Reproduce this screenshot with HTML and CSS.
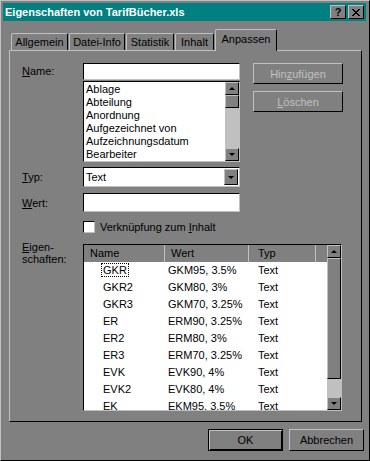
FILE: index.html
```html
<!DOCTYPE html>
<html lang="de">
<head>
    <meta charset="UTF-8">
    <title>Eigenschaften von TarifBücher.xls</title>
    <link rel="stylesheet" href="styles.css">
</head>
<body>
    <div class="window">
        <div class="titlebar">
            <span class="title">Eigenschaften von TarifBücher.xls</span>
            <div class="caption-buttons">
                <span class="cap-btn">?</span>
                <span class="cap-btn">
                    <svg width="8" height="7" viewBox="0 0 8 7"><path d="M0 0h2v1h1v1h2v-1h1v-1h2v1h-1v1h-1v1h-1v1h1v1h1v1h1v1h-2v-1h-1v-1h-2v1h-1v1h-2v-1h1v-1h1v-1h1v-1h-1v-1h-1v-1h-1z" fill="#000"/></svg>
                </span>
            </div>
        </div>

        <div class="tabs">
            <div class="tab" style="width: 57px">Allgemein</div>
            <div class="tab" style="width: 56px">Datei-Info</div>
            <div class="tab" style="width: 48px">Statistik</div>
            <div class="tab" style="width: 39px">Inhalt</div>
            <div class="tab active" style="width: 62px">Anpassen</div>
        </div>

        <div class="panel">
            <div class="row row-name">
                <label class="lbl"><u>N</u>ame:</label>
                <div class="name-col">
                    <div class="field name-input"></div>
                    <div class="field listbox">
                        <div class="list-items">
                            <div>Ablage</div>
                            <div>Abteilung</div>
                            <div>Anordnung</div>
                            <div>Aufgezeichnet von</div>
                            <div>Aufzeichnungsdatum</div>
                            <div>Bearbeiter</div>
                        </div>
                        <div class="vscroll">
                            <span class="sb-btn up"></span>
                            <span class="sb-thumb small"></span>
                            <span class="sb-track"></span>
                            <span class="sb-btn down"></span>
                        </div>
                    </div>
                </div>
                <div class="side-buttons">
                    <span class="btn disabled">Hin<u>z</u>ufügen</span>
                    <span class="btn disabled"><u>L</u>öschen</span>
                </div>
            </div>

            <div class="row row-typ">
                <label class="lbl"><u>T</u>yp:</label>
                <div class="field combo">
                    <span class="combo-text">Text</span>
                    <span class="sb-btn down combo-btn"></span>
                </div>
            </div>

            <div class="row row-wert">
                <label class="lbl"><u>W</u>ert:</label>
                <div class="field wert-input"></div>
            </div>

            <div class="row row-check">
                <span class="checkbox"></span>
                <span class="check-label">Verknüpfung zum <u>I</u>nhalt</span>
            </div>

            <div class="row row-props">
                <label class="lbl two-line"><u>E</u>igen-<br>schaften:</label>
                <div class="field listview">
                    <div class="lv-main">
                        <div class="lv-header">
                            <span class="hcell c-name">Name</span>
                            <span class="hcell c-wert">Wert</span>
                            <span class="hcell c-typ">Typ</span>
                            <span class="hcell c-rest"></span>
                        </div>
                        <div class="lv-body">
                            <div class="lv-row"><span class="cell c-name"><span class="focus">GKR</span></span><span class="cell c-wert">GKM95, 3.5%</span><span class="cell c-typ">Text</span></div>
                            <div class="lv-row"><span class="cell c-name">GKR2</span><span class="cell c-wert">GKM80, 3%</span><span class="cell c-typ">Text</span></div>
                            <div class="lv-row"><span class="cell c-name">GKR3</span><span class="cell c-wert">GKM70, 3.25%</span><span class="cell c-typ">Text</span></div>
                            <div class="lv-row"><span class="cell c-name">ER</span><span class="cell c-wert">ERM90, 3.25%</span><span class="cell c-typ">Text</span></div>
                            <div class="lv-row"><span class="cell c-name">ER2</span><span class="cell c-wert">ERM80, 3%</span><span class="cell c-typ">Text</span></div>
                            <div class="lv-row"><span class="cell c-name">ER3</span><span class="cell c-wert">ERM70, 3.25%</span><span class="cell c-typ">Text</span></div>
                            <div class="lv-row"><span class="cell c-name">EVK</span><span class="cell c-wert">EVK90, 4%</span><span class="cell c-typ">Text</span></div>
                            <div class="lv-row"><span class="cell c-name">EVK2</span><span class="cell c-wert">EVK80, 4%</span><span class="cell c-typ">Text</span></div>
                            <div class="lv-row"><span class="cell c-name">EK</span><span class="cell c-wert">EKM95, 3.5%</span><span class="cell c-typ">Text</span></div>
                        </div>
                    </div>
                    <div class="vscroll">
                        <span class="sb-btn up"></span>
                        <span class="sb-thumb big"></span>
                        <span class="sb-track"></span>
                        <span class="sb-btn down"></span>
                    </div>
                </div>
            </div>
        </div>

        <div class="footer">
            <span class="btn default">OK</span>
            <span class="btn">Abbrechen</span>
        </div>
    </div>
</body>
</html>
```

FILE: styles.css
```css
body {
    margin: 0;
    background-color: #808080;
    font-family: "Liberation Sans", Arial, sans-serif;
    font-size: 11px;
    color: #000;
}

.window {
    width: 370px;
    height: 461px;
    box-sizing: border-box;
    border: 1px solid;
    border-color: #c0c0c0 #000 #000 #c0c0c0;
    padding: 2px 3px 0 2px;
}

/* title bar */
.titlebar {
    height: 18px;
    background-color: #008080;
    display: flex;
    align-items: center;
    justify-content: space-between;
    padding: 0 2px 0 2px;
}

.title {
    color: #fff;
    font-weight: bold;
    font-size: 11px;
}

.caption-buttons {
    display: flex;
    gap: 2px;
}

.cap-btn {
    width: 14px;
    height: 12px;
    background-color: #808080;
    border: 1px solid;
    border-color: #c0c0c0 #000 #000 #c0c0c0;
    display: flex;
    align-items: center;
    justify-content: center;
    font-weight: bold;
    font-size: 11px;
}

/* tabs */
.tabs {
    display: flex;
    align-items: flex-end;
    height: 21px;
    margin-top: 8px;
    padding-left: 8px;
    position: relative;
    z-index: 1;
}

.tab {
    height: 17px;
    box-sizing: border-box;
    border: 1px solid;
    border-bottom: none;
    border-color: #c0c0c0 #000 #000 #c0c0c0;
    border-radius: 2px 2px 0 0;
    text-align: center;
    line-height: 17px;
    margin-right: 1px;
}

.tab.active {
    height: 22px;
    line-height: 18px;
    margin-bottom: -1px;
    background-color: #808080;
}

/* panel */
.panel {
    margin-left: 6px;
    width: 353px;
    height: 372px;
    box-sizing: border-box;
    border: 1px solid;
    border-color: #c0c0c0 #000 #000 #c0c0c0;
    padding: 12px 0 0 12px;
}

.row {
    display: flex;
}

.lbl {
    width: 61px;
    flex: none;
}

.lbl u, .btn u, .check-label u {
    text-decoration-thickness: 1px;
    text-underline-offset: 1px;
}

.field {
    box-sizing: border-box;
    background-color: #fff;
    border: 1px solid;
    border-color: #000 #c0c0c0 #c0c0c0 #000;
}

.row-name .lbl {
    padding-top: 2px;
}

.name-col {
    width: 157px;
    display: flex;
    flex-direction: column;
    gap: 1px;
}

.name-input {
    height: 17px;
}

.listbox {
    height: 81px;
    display: flex;
    overflow: hidden;
}

.list-items {
    flex: 1;
    padding: 1px 0 0 2px;
    line-height: 13px;
    font-size: 11px;
}

.vscroll {
    width: 14px;
    flex: none;
    display: flex;
    flex-direction: column;
    background-color: #c0c0c0;
}

.sb-btn {
    height: 13px;
    flex: none;
    box-sizing: border-box;
    background-color: #808080;
    border: 1px solid;
    border-color: #c0c0c0 #000 #000 #c0c0c0;
    display: flex;
    align-items: center;
    justify-content: center;
}

.sb-btn::after {
    content: "";
    border-left: 3px solid transparent;
    border-right: 3px solid transparent;
}

.sb-btn.up::after {
    border-bottom: 3px solid #000;
}

.sb-btn.down::after {
    border-top: 3px solid #000;
}

.sb-thumb {
    flex: none;
    box-sizing: border-box;
    background-color: #808080;
    border: 1px solid;
    border-color: #c0c0c0 #000 #000 #c0c0c0;
}

.sb-thumb.small {
    height: 13px;
}

.sb-thumb.big {
    height: 121px;
}

.sb-track {
    flex: 1;
}

.side-buttons {
    margin-left: 13px;
    display: flex;
    flex-direction: column;
    gap: 7px;
}

.btn {
    width: 90px;
    height: 21px;
    box-sizing: border-box;
    border: 1px solid;
    border-color: #c0c0c0 #000 #000 #c0c0c0;
    display: flex;
    align-items: center;
    justify-content: center;
}

.btn.disabled {
    color: #c0c0c0;
}

.row-typ {
    margin-top: 5px;
    align-items: center;
}

.combo {
    width: 157px;
    height: 20px;
    display: flex;
    align-items: center;
    padding: 1px 1px 1px 2px;
}

.combo-text {
    flex: 1;
}

.combo-btn {
    width: 14px;
    height: 16px;
}

.row-wert {
    margin-top: 6px;
    align-items: center;
}

.wert-input {
    width: 157px;
    height: 19px;
}

.row-check {
    margin-top: 9px;
    padding-left: 61px;
    align-items: center;
    gap: 5px;
}

.checkbox {
    width: 12px;
    height: 12px;
    box-sizing: border-box;
    background-color: #fff;
    border: 1px solid;
    border-color: #000 #c0c0c0 #c0c0c0 #000;
}

.row-props {
    margin-top: 11px;
}

.two-line {
    line-height: 12px;
    margin-top: -3px;
}

.listview {
    width: 259px;
    height: 167px;
    display: flex;
    overflow: hidden;
}

.lv-main {
    flex: 1;
    overflow: hidden;
}

.lv-header {
    display: flex;
    height: 17px;
    background-color: #808080;
}

.hcell {
    box-sizing: border-box;
    height: 17px;
    line-height: 16px;
    padding-left: 6px;
    border-right: 1px solid #c0c0c0;
    flex: none;
}

.c-name {
    width: 81px;
}

.c-wert {
    width: 84px;
}

.c-typ {
    width: 67px;
}

.hcell.c-typ {
    padding-left: 9px;
}

.hcell.c-rest {
    flex: 1;
    border-right: none;
}

.lv-row {
    display: flex;
    height: 17px;
    line-height: 17px;
}

.cell {
    flex: none;
    white-space: nowrap;
}

.cell.c-name {
    padding-left: 19px;
    box-sizing: border-box;
}

.cell.c-wert {
    padding-left: 3px;
    box-sizing: border-box;
}

.cell.c-typ {
    padding-left: 9px;
    box-sizing: border-box;
}

.focus {
    outline: 1px dotted #000;
    outline-offset: 0;
    padding: 0 1px;
    margin-left: -1px;
}

/* bottom buttons */
.footer {
    display: flex;
    justify-content: flex-end;
    gap: 6px;
    margin-top: 7px;
    padding-right: 2px;
}

.footer .btn {
    width: 75px;
    height: 22px;
}

.btn.default {
    border: 1px solid #000;
    box-shadow: inset 1px 1px #c0c0c0, inset -1px -1px #000;
}
```
